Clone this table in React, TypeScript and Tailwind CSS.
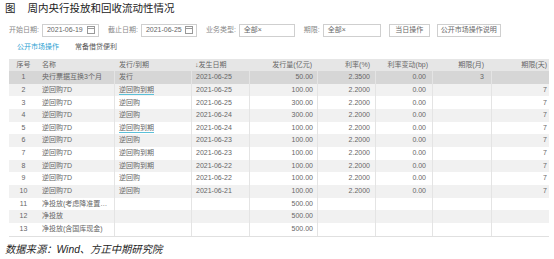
import React from 'react';

type Row = {
  no: number;
  name: string;
  kind: string;
  link?: boolean;
  date: string;
  amount: string;
  rate: string;
  change: string;
  month: string;
  day: string;
};

const rows: Row[] = [
  { no: 1, name: '央行票据互换3个月', kind: '发行', date: '2021-06-25', amount: '50.00', rate: '2.3500', change: '0.00', month: '3', day: '' },
  { no: 2, name: '逆回购7D', kind: '逆回购到期', link: true, date: '2021-06-25', amount: '100.00', rate: '2.2000', change: '0.00', month: '', day: '7' },
  { no: 3, name: '逆回购7D', kind: '逆回购', date: '2021-06-25', amount: '300.00', rate: '2.2000', change: '0.00', month: '', day: '7' },
  { no: 4, name: '逆回购7D', kind: '逆回购', date: '2021-06-24', amount: '300.00', rate: '2.2000', change: '0.00', month: '', day: '7' },
  { no: 5, name: '逆回购7D', kind: '逆回购到期', link: true, date: '2021-06-24', amount: '100.00', rate: '2.2000', change: '0.00', month: '', day: '7' },
  { no: 6, name: '逆回购7D', kind: '逆回购', date: '2021-06-23', amount: '100.00', rate: '2.2000', change: '0.00', month: '', day: '7' },
  { no: 7, name: '逆回购7D', kind: '逆回购到期', date: '2021-06-23', amount: '100.00', rate: '2.2000', change: '0.00', month: '', day: '7' },
  { no: 8, name: '逆回购7D', kind: '逆回购到期', date: '2021-06-22', amount: '100.00', rate: '2.2000', change: '0.00', month: '', day: '7' },
  { no: 9, name: '逆回购7D', kind: '逆回购', date: '2021-06-22', amount: '100.00', rate: '2.2000', change: '0.00', month: '', day: '7' },
  { no: 10, name: '逆回购7D', kind: '逆回购', date: '2021-06-21', amount: '100.00', rate: '2.2000', change: '0.00', month: '', day: '7' },
  { no: 11, name: '净投放(考虑降准置…', kind: '', date: '', amount: '500.00', rate: '', change: '', month: '', day: '' },
  { no: 12, name: '净投放', kind: '', date: '', amount: '500.00', rate: '', change: '', month: '', day: '' },
  { no: 13, name: '净投放(含国库现金)', kind: '', date: '', amount: '500.00', rate: '', change: '', month: '', day: '' },
];

const CalendarIcon = () => (
  <svg width="8" height="8" viewBox="0 0 8 8" className="shrink-0">
    <rect x="0.5" y="0.5" width="7" height="7" fill="none" stroke="#999" />
    <line x1="0.5" y1="2.5" x2="7.5" y2="2.5" stroke="#999" />
  </svg>
);

// 筛选框
const Field = ({ label, value, width, icon }: { label: string; value: string; width: string; icon?: boolean }) => (
  <div className="flex items-center">
    <span className="text-[7px] text-[#888] mr-[3px]">{label}</span>
    <div className={`flex items-center justify-between h-[13px] border border-[#cfcfcf] bg-white pl-[4px] pr-[3px] ${width}`}>
      <span className="text-[7px] text-[#666]">{value}</span>
      {icon && <CalendarIcon />}
    </div>
  </div>
);

const cell = 'h-full flex items-center border-r border-[#e4e4e4] overflow-hidden whitespace-nowrap';

export default function App() {
  return (
    <div className="w-[554px] h-[259px] bg-white overflow-hidden font-['Liberation_Sans','Noto_Sans_CJK_SC',sans-serif]">
      {/* 标题 */}
      <div className="flex items-center h-[17px] pl-[5px] pt-[1px] text-[10.5px] text-[#222]">
        <span>图</span>
        <span className="ml-[12px]">周内央行投放和回收流动性情况</span>
      </div>

      {/* 筛选 */}
      <div className="flex items-center h-[14px] mt-[6px] pl-[9px]">
        <Field label="开始日期:" value="2021-06-19" width="w-[57px]" icon />
        <div className="w-[9px]" />
        <Field label="截止日期:" value="2021-06-25" width="w-[56px]" icon />
        <div className="w-[9px]" />
        <Field label="业务类型:" value="全部×" width="w-[56px]" />
        <div className="w-[9px]" />
        <Field label="期限:" value="全部×" width="w-[58px]" />
        <button className="ml-[8px] h-[13px] w-[41px] border border-[#cfcfcf] bg-white text-[7px] text-[#666]">当日操作</button>
        <button className="ml-[7px] h-[13px] w-[64px] border border-[#cfcfcf] bg-white text-[7px] text-[#666]">公开市场操作说明</button>
      </div>

      {/* 标签 */}
      <div className="flex items-center h-[11px] mt-[5px] pl-[17px] text-[7px]">
        <span className="text-[#2e9fd2]">公开市场操作</span>
        <span className="ml-[16px] text-[#555]">常备借贷便利</span>
      </div>

      {/* 表格 */}
      <div className="ml-[9px] mt-[5.5px] w-[540px] text-[7px] text-[#666]">
        <div className="flex h-[12.7px] bg-[#e6e6e6]">
          <div className="w-[29px] h-full flex items-center justify-center">序号</div>
          <div className={`${cell} w-[77px] pl-[4px] border-[#e6e6e6]`}>名称</div>
          <div className={`${cell} w-[77px] pl-[4px] border-[#e6e6e6]`}>发行/到期</div>
          <div className={`${cell} w-[58px] pl-[3px] border-[#e6e6e6]`}>↓发生日期</div>
          <div className={`${cell} w-[68px] justify-end pr-[5px] border-[#e6e6e6]`}>发行量(亿元)</div>
          <div className={`${cell} w-[58px] justify-end pr-[5px] border-[#e6e6e6]`}>利率(%)</div>
          <div className={`${cell} w-[57px] justify-end pr-[4px] border-[#e6e6e6]`}>利率变动(bp)</div>
          <div className={`${cell} w-[59px] justify-end pr-[7px] border-[#e6e6e6]`}>期限(月)</div>
          <div className="w-[57px] h-full flex items-center justify-end pr-[2px]">期限(天)</div>
        </div>
        {rows.map((r) => {
          const bg = r.no === 1 ? 'bg-[#d6d6d6]' : r.no % 2 === 0 ? 'bg-[#f1f1f1]' : 'bg-white';
          return (
            <div key={r.no} className={`flex h-[12.65px] ${bg}`}>
              <div className="w-[29px] h-full flex items-center justify-center">{r.no}</div>
              <div className={`${cell} w-[77px] pl-[4px]`}>{r.name}</div>
              <div className={`${cell} w-[77px] pl-[4px]`}>
                <span className={r.link ? 'border-b border-[#5bc0d8] leading-[8px]' : ''}>{r.kind}</span>
              </div>
              <div className={`${cell} w-[58px] pl-[4px]`}>{r.date}</div>
              <div className={`${cell} w-[68px] justify-end pr-[4px]`}>{r.amount}</div>
              <div className={`${cell} w-[58px] justify-end pr-[5px]`}>{r.rate}</div>
              <div className={`${cell} w-[57px] justify-end pr-[6px]`}>{r.change}</div>
              <div className={`${cell} w-[59px] justify-end pr-[7px]`}>{r.month}</div>
              <div className="w-[57px] h-full flex items-center justify-end pr-[2px]">{r.day}</div>
            </div>
          );
        })}
        <div className="h-px bg-[#e0e0e0]" />
      </div>

      {/* 数据来源 */}
      <div className="pl-[5px] mt-[5px] text-[10.3px] italic text-[#222]">数据来源：Wind、方正中期研究院</div>
    </div>
  );
}
